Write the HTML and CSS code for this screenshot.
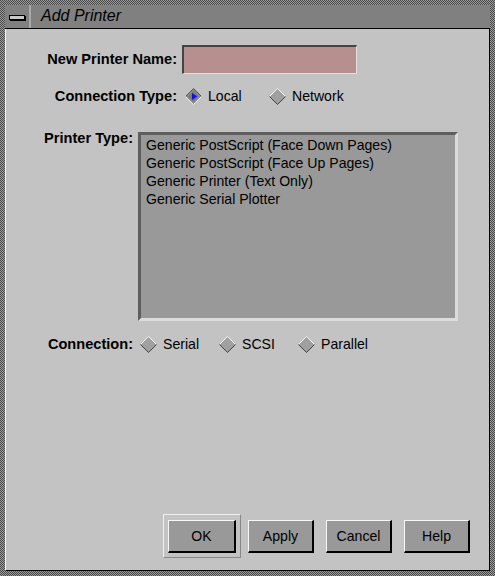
FILE: index.html
```html
<!DOCTYPE html>
<html>
<head>
<meta charset="utf-8">
<link rel="stylesheet" href="styles.css">
</head>
<body>
<div class="frame">
  <div class="titlebar">
    <div class="menubtn"><span class="bar"></span></div>
    <div class="title">Add Printer</div>
  </div>
  <div class="content">
    <div class="row row-name">
      <div class="label wide">New Printer Name:</div>
      <div class="field"></div>
    </div>
    <div class="row row-type">
      <div class="label wide">Connection Type:</div>
      <div class="radios">
        <div class="radio r-local">
          <svg width="17" height="17" viewBox="0 0 17 17">
            <polygon points="8.5,0.5 16.5,8.5 8.5,16.5 0.5,8.5" fill="#8c8c8c"/>
            <polyline points="0.5,8.5 8.5,0.5 16.5,8.5" fill="none" stroke="#555" stroke-width="1"/>
            <polyline points="0.5,8.5 8.5,16.5 16.5,8.5" fill="none" stroke="#f0f0f0" stroke-width="1"/>
            <polygon points="8.5,3 14,8.5 8.5,14 3,8.5" fill="#7a7a7a"/>
            <polygon points="7,5 12,8.5 7,12" fill="#1010e8"/>
          </svg>
          <span>Local</span>
        </div>
        <div class="radio r-net">
          <svg width="17" height="17" viewBox="0 0 17 17">
            <polygon points="8.5,0.5 16.5,8.5 8.5,16.5 0.5,8.5" fill="#a0a0a0"/>
            <polyline points="0.5,8.5 8.5,0.5 16.5,8.5" fill="none" stroke="#f4f4f4" stroke-width="1"/>
            <polyline points="0.5,8.5 8.5,16.5 16.5,8.5" fill="none" stroke="#444" stroke-width="1"/>
          </svg>
          <span>Network</span>
        </div>
      </div>
    </div>
    <div class="row row-list">
      <div class="label narrow">Printer Type:</div>
      <div class="list">
        <div class="item">Generic PostScript (Face Down Pages)</div>
        <div class="item">Generic PostScript (Face Up Pages)</div>
        <div class="item">Generic Printer (Text Only)</div>
        <div class="item">Generic Serial Plotter</div>
      </div>
    </div>
    <div class="row row-conn">
      <div class="label narrow">Connection:</div>
      <div class="radios conn">
        <div class="radio">
          <svg width="17" height="17" viewBox="0 0 17 17">
            <polygon points="8.5,0.5 16.5,8.5 8.5,16.5 0.5,8.5" fill="#a0a0a0"/>
            <polyline points="0.5,8.5 8.5,0.5 16.5,8.5" fill="none" stroke="#f4f4f4" stroke-width="1"/>
            <polyline points="0.5,8.5 8.5,16.5 16.5,8.5" fill="none" stroke="#444" stroke-width="1"/>
          </svg>
          <span>Serial</span>
        </div>
        <div class="radio">
          <svg width="17" height="17" viewBox="0 0 17 17">
            <polygon points="8.5,0.5 16.5,8.5 8.5,16.5 0.5,8.5" fill="#a0a0a0"/>
            <polyline points="0.5,8.5 8.5,0.5 16.5,8.5" fill="none" stroke="#f4f4f4" stroke-width="1"/>
            <polyline points="0.5,8.5 8.5,16.5 16.5,8.5" fill="none" stroke="#444" stroke-width="1"/>
          </svg>
          <span>SCSI</span>
        </div>
        <div class="radio">
          <svg width="17" height="17" viewBox="0 0 17 17">
            <polygon points="8.5,0.5 16.5,8.5 8.5,16.5 0.5,8.5" fill="#a0a0a0"/>
            <polyline points="0.5,8.5 8.5,0.5 16.5,8.5" fill="none" stroke="#f4f4f4" stroke-width="1"/>
            <polyline points="0.5,8.5 8.5,16.5 16.5,8.5" fill="none" stroke="#444" stroke-width="1"/>
          </svg>
          <span>Parallel</span>
        </div>
      </div>
    </div>
    <div class="buttons">
      <div class="default"><div class="btn ok">OK</div></div>
      <div class="btn">Apply</div>
      <div class="btn">Cancel</div>
      <div class="btn">Help</div>
    </div>
  </div>
</div>
</body>
</html>
```
FILE: styles.css
```css
html, body {
  margin: 0;
  padding: 0;
}
body {
  width: 495px;
  height: 576px;
  font-family: "Liberation Sans", Arial, sans-serif;
  font-size: 14.1px;
  color: #000;
  background-color: #6a6a6a;
  background-image: repeating-conic-gradient(#9a9a9a 0 25%, #4a4a4a 0 50%);
  background-size: 2px 2px;
  overflow: hidden;
}
.frame {
  box-sizing: border-box;
  width: 495px;
  height: 576px;
  padding: 5px 5px 5px 5px;
  display: flex;
  flex-direction: column;
}
.titlebar {
  height: 23px;
  background: #808080;
  display: flex;
  align-items: stretch;
  border-bottom: 1px solid #000;
}
.menubtn {
  width: 24px;
  border-right: 2px solid #a8a8a8;
  display: flex;
  align-items: center;
  justify-content: center;
}
.bar {
  display: block;
  width: 14px;
  height: 3px;
  background: #c8c8c8;
  border: 1px solid #000;
  box-shadow: 1px 1px 0 #000;
  margin-top: 1px;
}
.title {
  font-style: italic;
  font-size: 16px;
  padding-left: 10px;
  line-height: 22px;
  color: #000;
}
.content {
  flex: 1;
  background: #c3c3c3;
  border-left: 1px solid #f4f4f4;
  border-right: 1px solid #000;
  border-bottom: 1px solid #000;
  display: flex;
  flex-direction: column;
}
.row {
  display: flex;
  align-items: center;
}
.label {
  font-weight: bold;
  font-size: 14.6px;
  text-align: right;
  flex: none;
}
.label.wide { width: 171px; margin-right: 5px; }
.label.narrow { width: 127px; margin-right: 5px; }
.row-name { margin-top: 16px; height: 28px; }
.field {
  box-sizing: border-box;
  width: 175px;
  height: 29px;
  background: #b88f8f;
  border-top: 2px solid #444;
  border-left: 2px solid #444;
  border-bottom: 1px solid #e0e0e0;
  border-right: 1px solid #e0e0e0;
}
.row-type { margin-top: 11px; height: 24px; }
.radios {
  display: flex;
  align-items: center;
}
.radio {
  display: flex;
  align-items: center;
}
.radio svg { display: block; flex: none; }
.radio span { margin-left: 6px; }
.row-type .radios { margin-left: 3px; }
.r-local { width: 84px; }
.row-list {
  margin-top: 24px;
  align-items: flex-start;
}
.row-list .label { margin-top: -2px; }
.list {
  box-sizing: border-box;
  width: 320px;
  height: 189px;
  background: #999;
  border-top: 3px solid #5e5e5e;
  border-left: 3px solid #5e5e5e;
  border-bottom: 3px solid #dcdcdc;
  border-right: 3px solid #dcdcdc;
  padding: 1px 0 0 5px;
}
.item {
  line-height: 18px;
  white-space: nowrap;
}
.row-conn { margin-top: 11px; height: 24px; }
.conn { margin-left: 2px; }
.conn .radio { width: 79px; }
.buttons {
  margin-top: auto;
  margin-bottom: 12px;
  display: flex;
  align-items: center;
  justify-content: flex-end;
  padding-right: 19px;
  gap: 12px;
}
.default {
  box-sizing: border-box;
  width: 78px;
  height: 44px;
  border: 1px solid #eee;
  border-right-color: #888;
  border-bottom-color: #888;
  display: flex;
  align-items: center;
  justify-content: center;
  margin-right: -5px;
}
.btn {
  box-sizing: border-box;
  width: 66px;
  height: 33px;
  background: #999;
  border-top: 1px solid #f8f8f8;
  border-left: 1px solid #f8f8f8;
  border-bottom: 2px solid #000;
  border-right: 2px solid #000;
  display: flex;
  align-items: center;
  justify-content: center;
}
.btn.ok { width: 68px; }
```
